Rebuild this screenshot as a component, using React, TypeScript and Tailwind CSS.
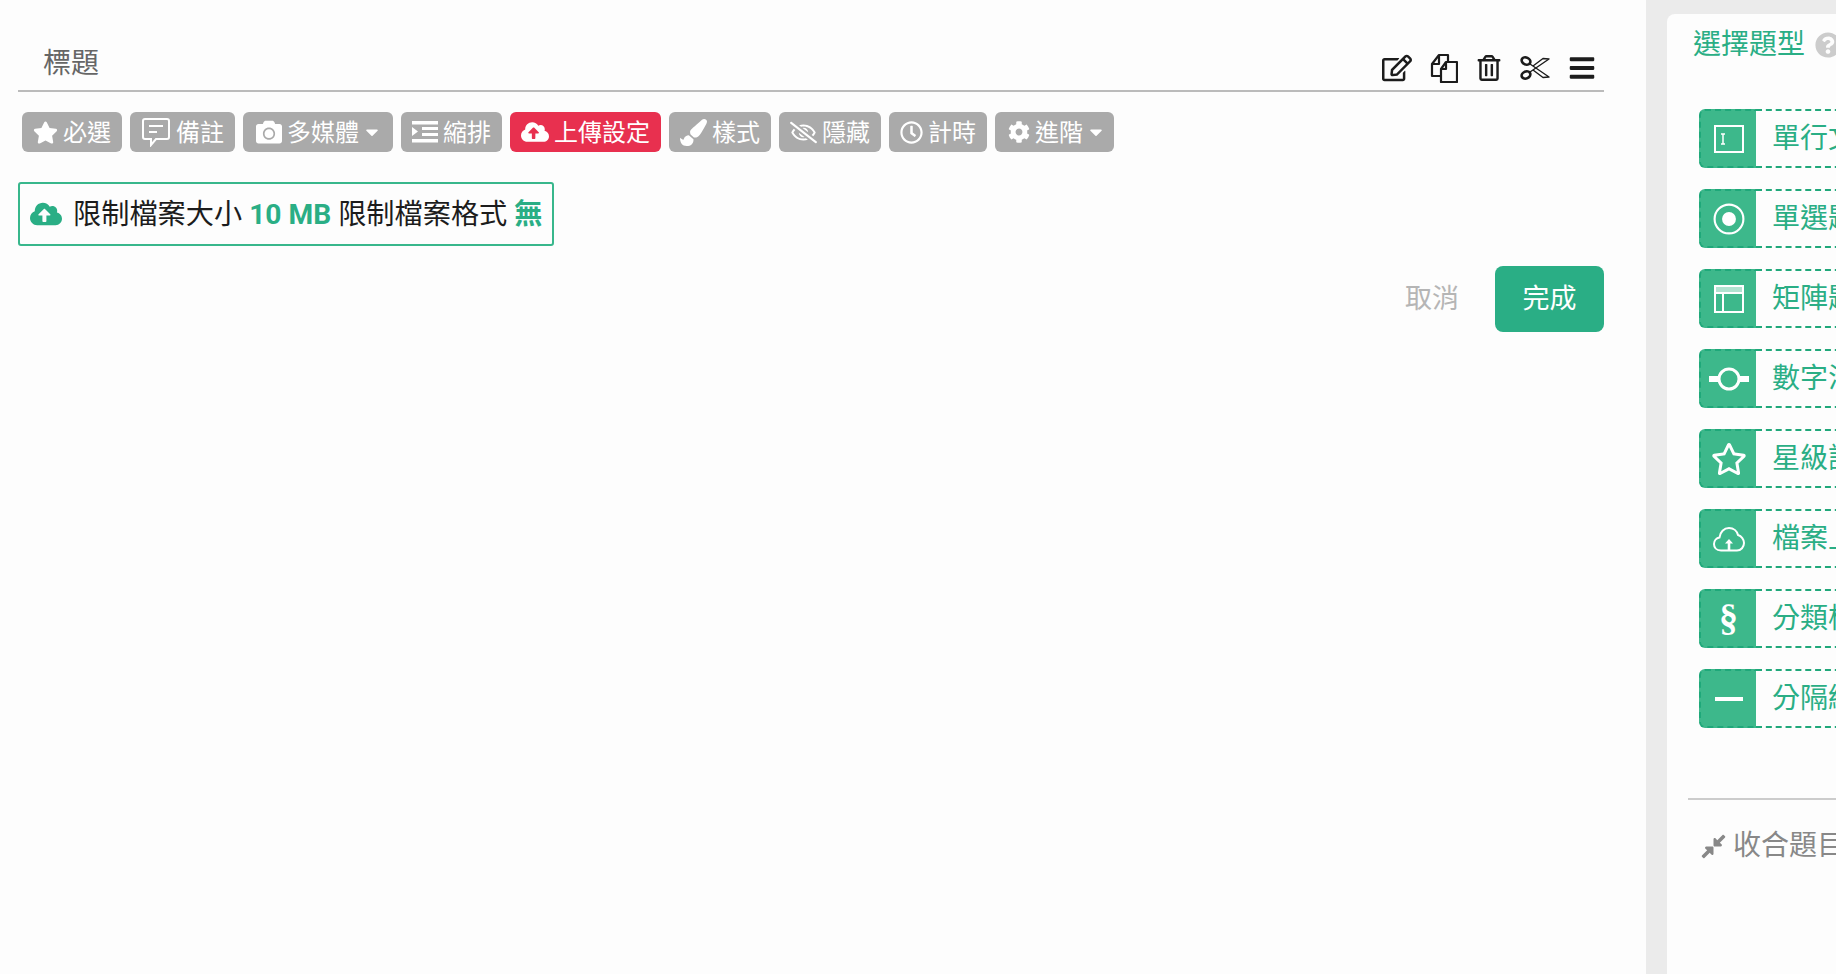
import React from 'react';
import {
  FaStar, FaCamera, FaCloudUploadAlt, FaPaintBrush, FaRegEyeSlash, FaRegClock, FaCog,
  FaCaretDown, FaRegEdit, FaRegTrashAlt, FaBars, FaQuestionCircle, FaCompressAlt, FaRegStar,
} from 'react-icons/fa';

const CommentIcon = () => (
  <svg viewBox="0 0 30 30" className="w-[30px] h-[30px]" fill="none" stroke="currentColor" strokeWidth="2">
    <path d="M4 2h22a2 2 0 0 1 2 2v16a2 2 0 0 1-2 2H15l-5 6v-6H4a2 2 0 0 1-2-2V4a2 2 0 0 1 2-2z" />
    <path d="M8 9h14M8 15h8" />
  </svg>
);

const IndentIcon = () => (
  <svg viewBox="0 0 26 24" className="w-[26px] h-[24px]" fill="currentColor">
    <rect x="0" y="1" width="26" height="3.5" />
    <rect x="10" y="7" width="16" height="3" />
    <rect x="10" y="13" width="16" height="3" />
    <rect x="0" y="19" width="26" height="3.5" />
    <path d="M0 7l6 4.5L0 16z" />
  </svg>
);

const CopyIcon = () => (
  <svg viewBox="0 0 28 30" className="w-[28px] h-[30px]" fill="none" stroke="currentColor" strokeWidth="2.2" strokeLinejoin="round">
    <path d="M10 23H2V11L9 2h9v8" />
    <path d="M2 11h7V2" />
    <path d="M16 9h11v20H11V16z" />
    <path d="M11 16h5V9" />
  </svg>
);

const ScissorsIcon = () => (
  <svg viewBox="0 0 30 28" className="w-[30px] h-[28px]" fill="none" stroke="currentColor">
    <ellipse cx="6" cy="7" rx="4.5" ry="3.5" transform="rotate(25 6 7)" strokeWidth="2.6" />
    <ellipse cx="6" cy="21" rx="4.5" ry="3.5" transform="rotate(-25 6 21)" strokeWidth="2.6" />
    <path d="M10 10l19 13-6 0.5L13 16" strokeWidth="1.4" strokeLinejoin="round" />
    <path d="M10 18L29 5l-6-0.5L13 12" strokeWidth="1.4" strokeLinejoin="round" />
  </svg>
);

const tools = [
  { label: '必選', icon: <FaStar className="w-[25px] h-[25px]" />, pad: 'px-[11px]' },
  { label: '備註', icon: <CommentIcon />, pad: 'px-[11px]' },
  { label: '多媒體', icon: <FaCamera className="w-[26px] h-[26px]" />, pad: 'pl-[13px] pr-[11px]', caret: true },
  { label: '縮排', icon: <IndentIcon />, pad: 'px-[11px]' },
  { label: '上傳設定', icon: <FaCloudUploadAlt className="w-[28px] h-[28px]" />, pad: 'px-[11px]', active: true },
  { label: '樣式', icon: <FaPaintBrush className="w-[27px] h-[27px]" />, pad: 'px-[11px]' },
  { label: '隱藏', icon: <FaRegEyeSlash className="w-[27px] h-[27px]" />, pad: 'px-[11px]' },
  { label: '計時', icon: <FaRegClock className="w-[23px] h-[23px]" />, pad: 'px-[11px]' },
  { label: '進階', icon: <FaCog className="w-[22px] h-[22px]" />, pad: 'pl-[13px] pr-[8px]', caret: true },
];

const types = [
  {
    label: '單行文字',
    icon: (
      <svg viewBox="0 0 30 28" className="w-[30px] h-[28px]" fill="none" stroke="white" strokeWidth="2">
        <rect x="1" y="1" width="28" height="26" />
        <path d="M7 9h4M7 19h4M9 9v10" strokeWidth="1.5" />
      </svg>
    ),
  },
  {
    label: '單選題',
    icon: (
      <svg viewBox="0 0 30 30" className="w-[32px] h-[32px]">
        <circle cx="15" cy="15" r="13.5" fill="none" stroke="white" strokeWidth="2" />
        <circle cx="15" cy="15" r="6.5" fill="white" />
      </svg>
    ),
  },
  {
    label: '矩陣題',
    icon: (
      <svg viewBox="0 0 30 28" className="w-[30px] h-[28px]" fill="none" stroke="white" strokeWidth="2">
        <rect x="1" y="1" width="28" height="26" />
        <rect x="1" y="1" width="28" height="6" fill="white" fillOpacity="0.6" stroke="none" />
        <path d="M1 8h28M9 8v19" />
      </svg>
    ),
  },
  {
    label: '數字滑桿',
    icon: (
      <svg viewBox="0 0 40 24" className="w-[40px] h-[24px]" fill="none" stroke="white">
        <circle cx="20" cy="12" r="10" strokeWidth="3" />
        <path d="M0 12h9M31 12h9" strokeWidth="6" />
      </svg>
    ),
  },
  { label: '星級評分', icon: <FaRegStar className="w-9 h-9 text-white" /> },
  {
    label: '檔案上傳',
    icon: (
      <svg viewBox="0 0 32 26" className="w-[32px] h-[26px]" fill="none" stroke="white" strokeWidth="2">
        <path d="M8 24.5C3 24.5 1 21 1 18C1 14.5 3.5 12 6.5 11.5C7 6 11 2 16 2C20.5 2 24 5 25 9C28.5 10 31 13.5 31 17C31 21 28 24.5 24 24.5Z" />
        <path d="M16 24v-7" strokeWidth="2.6" />
        <path d="M12 17.5l4-4.5 4 4.5z" fill="white" stroke="none" />
      </svg>
    ),
  },
  { label: '分類標題', icon: <span className="-mt-1 font-['Liberation_Serif',serif] text-[38px] font-bold leading-none text-white">§</span> },
  { label: '分隔線', icon: <div className="w-7 h-1 bg-white" /> },
];

export default function App() {
  return (
    <div className="flex h-screen overflow-hidden bg-[#fdfdfd] font-['Roboto','Noto_Sans_CJK_TC',sans-serif]">
      <main className="w-[1646px] flex-none pl-[18px] pr-[42px]">
        <header className="flex h-[92px] items-end justify-between border-b-2 border-[#bbbbbb] pb-[7px]">
          <h1 className="pl-[25px] text-[28px] font-normal leading-[38px] text-[#666666]">標題</h1>
          <div className="flex items-center gap-[18px] pr-[8px] text-[#1c1c1c]">
            <FaRegEdit className="w-[30px] h-[30px]" />
            <CopyIcon />
            <FaRegTrashAlt className="w-[26px] h-[26px]" />
            <ScissorsIcon />
            <FaBars className="w-[28px] h-[28px]" />
          </div>
        </header>

        <div className="ml-1 mt-5 flex gap-2">
          {tools.map((tool) => (
            <button
              key={tool.label}
              className={`flex h-10 items-center gap-[5px] rounded-md text-[24px] leading-none text-white ${tool.pad} ${tool.active ? 'bg-[#e8304f]' : 'bg-[#aaaaaa]'}`}
            >
              {tool.icon}
              <span className="pt-[2px]">{tool.label}</span>
              {tool.caret && <FaCaretDown className="-ml-[2px] w-5 h-5" />}
            </button>
          ))}
        </div>

        <div className="mt-[30px] inline-flex h-16 items-center gap-[11px] rounded-[3px] border-2 border-[#38b78c] px-[10px] text-[28.2px] text-[#1c1c1c]">
          <FaCloudUploadAlt className="w-8 h-8 text-[#2aae85]" />
          <span className="pt-[2px]">
            限制檔案大小 <b className="font-bold text-[#2aae85]">10 MB</b> 限制檔案格式 <b className="font-bold text-[#2aae85]">無</b>
          </span>
        </div>

        <div className="mt-5 flex items-center justify-end gap-[36px]">
          <span className="text-[27px] text-[#b5b5b5]">取消</span>
          <button className="h-[66px] w-[109px] rounded-lg bg-[#2aae85] text-[27px] text-white">完成</button>
        </div>
      </main>

      <div className="flex-1 bg-[#ebebeb] pl-[21px] pt-[14px]">
        <aside className="h-full w-[420px] rounded-tl-lg bg-[#fdfdfd] pl-[26px]">
          <div className="flex h-[62px] items-center gap-[10px]">
            <h2 className="text-[28px] font-normal text-[#2aae85]">選擇題型</h2>
            <FaQuestionCircle className="w-[26px] h-[26px] flex-none text-[#cccccc]" />
          </div>
          <div className="mt-[33px] flex flex-col gap-[21px] pl-[6px]">
            {types.map((type) => (
              <div key={type.label} className="flex h-[59px]">
                <div className="flex w-[57px] flex-none items-center justify-center rounded-l-md border-2 border-r-0 border-dashed border-[#1fa87a] bg-[#3db88b]">
                  {type.icon}
                </div>
                <div className="flex flex-1 items-center border-y-2 border-r-2 border-dashed border-[#1fa87a] pl-[16px] text-[28px] whitespace-nowrap text-[#2aae85]">
                  {type.label}
                </div>
              </div>
            ))}
          </div>
          <div className="-ml-[5px] mt-[70px] flex items-center gap-[6px] border-t-2 border-[#cccccc] pl-[12px] pt-[25px] text-[28px] text-[#888888]">
            <FaCompressAlt className="w-[27px] h-[27px]" />
            <span>收合題目</span>
          </div>
        </aside>
      </div>
    </div>
  );
}
